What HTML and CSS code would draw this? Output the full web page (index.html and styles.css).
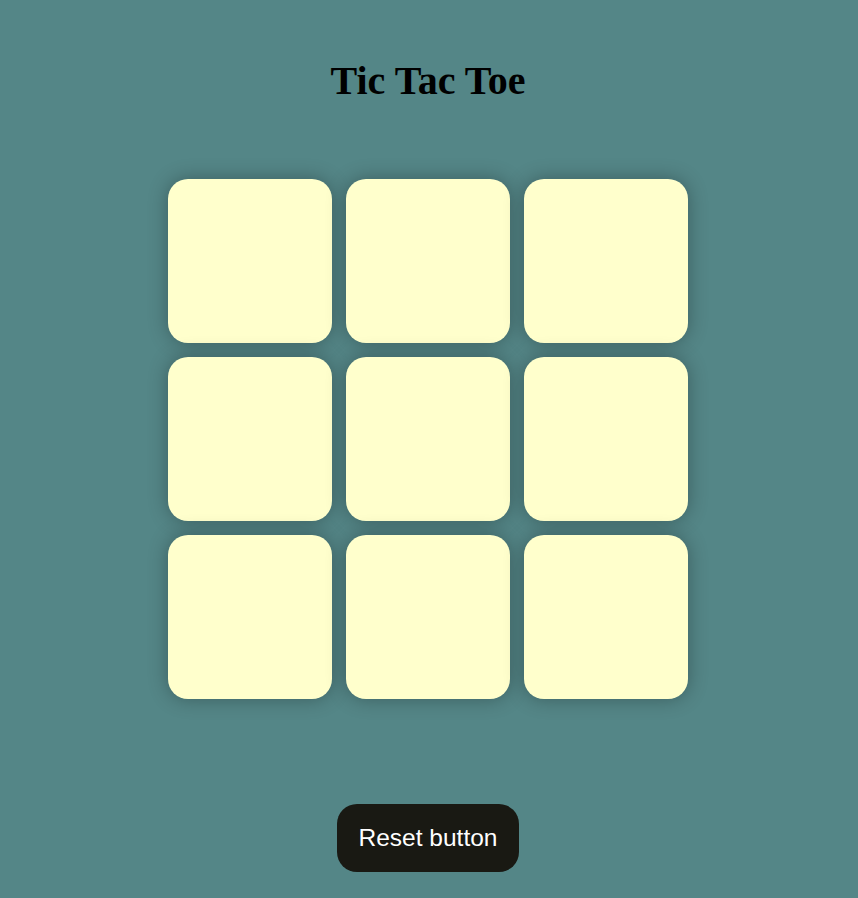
FILE: index.html
```html
<!DOCTYPE html>
<html>
<head>
<meta charset="utf-8">
<link rel="stylesheet" href="styles.css">
</head>
<body>
<main class="page">
  <h1 class="title">Tic Tac Toe</h1>
  <div class="board">
    <div class="cell"></div>
    <div class="cell"></div>
    <div class="cell"></div>
    <div class="cell"></div>
    <div class="cell"></div>
    <div class="cell"></div>
    <div class="cell"></div>
    <div class="cell"></div>
    <div class="cell"></div>
  </div>
  <button class="reset">Reset button</button>
</main>
</body>
</html>
```

FILE: styles.css
```css
html, body {
  margin: 0;
  padding: 0;
  background: #548687;
  height: 100%;
}
.page {
  display: flex;
  flex-direction: column;
  align-items: center;
  padding-top: 59px;
  padding-right: 2px;
}
.title {
  margin: 0;
  font-family: "Liberation Serif", "Times New Roman", serif;
  font-weight: bold;
  font-size: 40px;
  line-height: 44px;
  color: #000;
}
.board {
  margin-top: 76px;
  display: grid;
  grid-template-columns: repeat(3, 164px);
  grid-auto-rows: 164px;
  gap: 14px;
}
.cell {
  background: #ffffcc;
  border-radius: 20px;
  box-shadow: 0 0 20px rgba(0, 0, 0, 0.3);
}
.reset {
  margin-top: 105px;
  background: #191913;
  color: #fff;
  border: none;
  border-radius: 20px;
  font-family: "Liberation Sans", Arial, sans-serif;
  font-size: 24.5px;
  line-height: 28px;
  padding: 20px 22px;
}
```
